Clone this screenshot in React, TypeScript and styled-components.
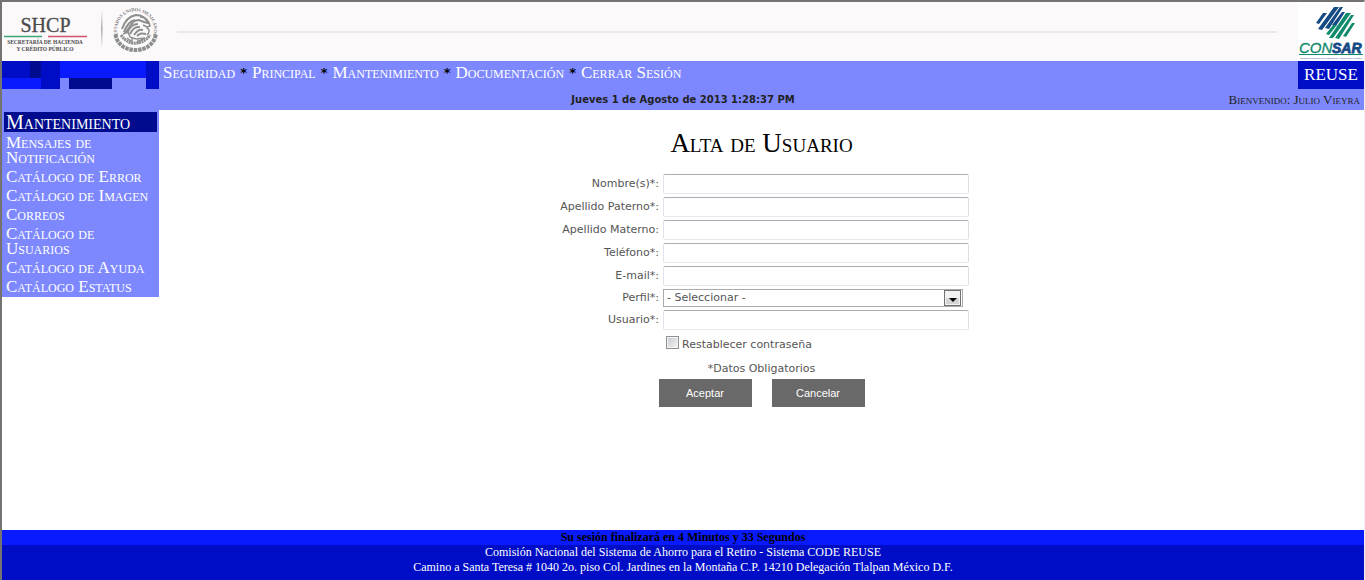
import React from 'react';
import styled, { createGlobalStyle } from 'styled-components';

const colors = {
  light: '#7d88ff',
  bright: '#0a1aff',
  mid: '#000dc7',
  dark: '#000b8e',
  label: '#555555',
};
const serif = `'Liberation Serif', 'Times New Roman', serif`;
const sans = `'DejaVu Sans', Verdana, sans-serif`;

const GlobalStyle = createGlobalStyle`
  * { box-sizing: border-box; }
  body { margin: 0; background: #fff; font-family: ${serif}; }
`;

const Page = styled.div`
  display: flex;
  flex-direction: column;
  min-height: 100vh;
  border-top: 2px solid #757272;
  border-left: 2px solid #757272;
  border-right: 1px solid #f0eef0;
`;

const Header = styled.header`
  display: flex;
  align-items: center;
  height: 59px;
  background: #fbf9fa;
`;

const Rule = styled.div`
  flex: 1;
  height: 2px;
  margin: 0 21px 0 16px;
  background: #eae8e9;
`;

const Band = styled.div`
  display: grid;
  grid-template-columns: 157px 1fr auto;
  grid-template-rows: 28px 21px;
  background: ${colors.light};
`;

const Nav = styled.nav`
  display: flex;
  align-items: center;
  gap: 5px;
  padding: 0 4px 5px;
  color: #000;
`;

const NavLink = styled.a`
  color: #fff;
  font-size: 17px;
  line-height: 20px;
  font-variant: small-caps;
  text-decoration: none;
`;

const Star = styled.span`
  font: bold 13px/20px ${sans};
`;

const SystemName = styled.div`
  width: 66px;
  background: ${colors.mid};
  color: #fff;
  font-size: 17px;
  line-height: 28px;
  text-align: center;
`;

const StatusRow = styled.div`
  grid-column: 1 / -1;
  display: grid;
  grid-template-columns: 1fr auto 1fr;
  align-items: center;
  color: #222;
`;

const Clock = styled.time`
  grid-column: 2;
  font: bold 10px/16px ${sans};
`;

const Welcome = styled.span`
  padding-right: 4px;
  font-size: 13px;
  line-height: 16px;
  font-variant: small-caps;
  text-align: right;
`;

const Body = styled.div`
  display: flex;
  flex: 1;
  align-items: flex-start;
`;

const Sidebar = styled.aside`
  width: 157px;
  padding: 2px 2px 1px;
  background: ${colors.light};
  color: #fff;
  font-variant: small-caps;
`;

const SideTitle = styled.h2`
  margin: 0 0 3px;
  padding: 0 2px;
  background: ${colors.dark};
  font-size: 20px;
  font-weight: normal;
  line-height: 20px;
`;

const SideList = styled.ul`
  display: grid;
  gap: 4px;
  margin: 0;
  padding: 0 2px 2px;
  list-style: none;
`;

const SideItem = styled.li`
  font-size: 17px;
  line-height: 15px;
`;

const SideLink = styled.a`
  color: inherit;
  text-decoration: none;
`;

const Main = styled.main`
  display: flex;
  flex: 1;
  flex-direction: column;
  align-items: center;
`;

const Title = styled.h1`
  margin: 18px 0 16px;
  font-size: 27px;
  font-weight: normal;
  line-height: 30px;
  font-variant: small-caps;
`;

const Form = styled.form`
  display: flex;
  flex-direction: column;
  align-items: center;
  color: ${colors.label};
  font: 11px/14px ${sans};
`;

const Fields = styled.div`
  display: grid;
  grid-template-columns: 105px 306px;
  gap: 3px 4px;
  align-items: center;
`;

const Label = styled.label`
  text-align: right;
  white-space: nowrap;
`;

const TextInput = styled.input`
  width: 100%;
  height: 20px;
  padding: 1px 3px;
  border: 1px solid #e3e9ef;
  border-top-color: #abadb3;
  border-left-color: #e2e3ea;
  border-right-color: #dbdfe6;
  border-radius: 2px;
  color: inherit;
  font: inherit;
`;

const SelectBox = styled.div`
  display: grid;
  grid-template-columns: 1fr 18px;
  width: 300px;
  height: 18px;
  border: 1px solid #ababab;
`;

const Select = styled.select`
  grid-area: 1 / 1 / 2 / 3;
  appearance: none;
  padding: 0 3px;
  border: 0;
  background: transparent;
  color: inherit;
  font: inherit;
`;

const SelectArrow = styled.svg`
  grid-area: 1 / 2;
  width: 18px;
  height: 16px;
  pointer-events: none;
`;

const CheckRow = styled.label`
  display: flex;
  align-items: flex-start;
  align-self: flex-start;
  gap: 3px;
  margin: 6px 0 8px 112px;
  line-height: 18px;
`;

const Checkbox = styled.input`
  appearance: none;
  width: 13px;
  height: 13px;
  margin: 0;
  border: 1px solid #8e8f8f;
  background: linear-gradient(135deg, #c5cad1, #f4f4f4);
  box-shadow: inset 0 0 0 1px #f4f4f4;
  &:checked { background: #4b5d8a; }
`;

const Note = styled.p`
  margin: 0 0 3px;
`;

const Buttons = styled.div`
  display: flex;
  gap: 20px;
`;

const Button = styled.button`
  width: 93px;
  height: 28px;
  padding: 0;
  border: 0;
  background: #696969;
  color: #fff;
  font: 11px/14px 'Liberation Sans', Arial, sans-serif;
`;

const Footer = styled.footer`
  background: ${colors.mid};
  color: #fff;
  font-size: 12px;
  line-height: 15px;
  text-align: center;
  padding-bottom: 5px;
`;

const Session = styled.div`
  background: ${colors.bright};
  color: #000;
  font-weight: bold;
`;

const GovernmentLogo = () => (
  <svg width="159" height="59" viewBox="2 2 159 59" role="img" aria-label="SHCP">
    <defs>
      <path id="sealArc" d="M118.500 37 A18.500 18.500 0 1 1 152.500 37" />
      <linearGradient id="divider" x1="0" y1="0" x2="0" y2="1">
        <stop offset="0" stopColor="#fbf9fa" />
        <stop offset=".5" stopColor="#aaa" />
        <stop offset="1" stopColor="#fbf9fa" />
      </linearGradient>
    </defs>
    <g fontFamily={serif} fill="#4a4a4a" textAnchor="middle">
      <text x="45.500" y="32" fontSize="20" stroke="#4a4a4a" strokeWidth=".3">SHCP</text>
      <text x="45" y="44" fontSize="5.500" fontWeight="bold">SECRETARÍA DE HACIENDA</text>
      <text x="45" y="50.500" fontSize="5.500" fontWeight="bold">Y CRÉDITO PÚBLICO</text>
    </g>
    <path d="M4 36.500H42" stroke="#3fa374" strokeWidth="1.300" />
    <path d="M48 36.500H87" stroke="#d4526c" strokeWidth="1.300" />
    <rect x="101" y="10" width="1.500" height="38" fill="url(#divider)" />
    <g fill="none" stroke="#8d8f8e">
      <path d="M115.500 34.500C117 44 125 50 135.500 50S154 44 155.800 34.500" strokeWidth="4" strokeDasharray="3.500 .8" />
      <path d="M121 35c5 7 11 9 14.500 8 6 0 11-3 14.500-8" strokeWidth="3" strokeDasharray="2 .6" />
      <path d="M122 29c3-9 8-13 14-14 6 0 10 3 12 8l-4-1-5-2-5 1-3 4-6 8" strokeWidth="2" />
      <path d="M124 32c3-8 6-11 11-12M127 33c3-7 6-9 11-9M130 34c3-6 5-7 10-7M134 35c3-4 5-6 9-5M137 36c3-3 5-3 9-2" strokeWidth="2" />
      <path d="M140 17c6 0 9 4 10 9l-3 1-4-2M146 27c4 2 4 5 1 8M123 34l5-2 2 5 6 2 9-1M132 38v6M138 38v6M127 38l4 3M143 39l-5 3" strokeWidth="1.500" />
    </g>
    <text fontFamily={serif} fontSize="4.500" fontWeight="bold" fill="#777">
      <textPath href="#sealArc" startOffset="50%" textAnchor="middle">ESTADOS UNIDOS MEXICANOS</textPath>
    </text>
  </svg>
);

const ConsarLogo = () => (
  <svg width="66" height="59" viewBox="1298 2 66 59" role="img" aria-label="CONSAR">
    <rect x="1298" y="2" width="66" height="59" fill="#fff" />
    <path
      d="M1316 23l7-10h4l-8 11zM1318 29l16-22h5l-17 23zM1325 28l15-21h3l-14 22zM1332 25l10-13h3l-9 14z"
      fill="#164a85"
    />
    <path
      d="M1326 34l7-9h4l-8 10zM1329 38l17-25h5l-18 25zM1335 38l16-23h3l-15 24zM1343 36l9-13h3l-9 14z"
      fill="#108a6c"
    />
    <g fontFamily="'Liberation Sans', Arial, sans-serif" fontStyle="italic">
      <text x="1299" y="53" fontSize="15" fill="#108a6c" stroke="#108a6c" strokeWidth=".3">CON</text>
      <text x="1332" y="53" fontSize="14" fontWeight="bold" fill="#164a85" stroke="#164a85" strokeWidth=".8">SAR</text>
    </g>
    <path d="M1299 54.500H1363" stroke="#108a6c" />
    <text x="1300" y="59" fontFamily="'Liberation Sans', Arial, sans-serif" fontSize="2.500" fill="#164a85">Comisión Nacional del Sistema de Ahorro para el Retiro</text>
  </svg>
);

const Mosaic = () => (
  <svg width="157" height="28" aria-hidden="true" shapeRendering="crispEdges">
    <path d="M0 0H28V17H0zM39 0H58V28H39zM144 0H157V28H144z" fill={colors.mid} />
    <path d="M28 0H39V17H28zM67 17H110V28H67z" fill={colors.dark} />
    <path d="M58 0H144V17H58zM0 17H39V28H0z" fill={colors.bright} />
  </svg>
);

const navItems = ['Seguridad', 'Principal', 'Mantenimiento', 'Documentación', 'Cerrar Sesión'];
const sideItems = [
  'Mensajes de Notificación',
  'Catálogo de Error',
  'Catálogo de Imagen',
  'Correos',
  'Catálogo de Usuarios',
  'Catálogo de Ayuda',
  'Catálogo Estatus',
];
const fields = [
  { id: 'nombre', label: 'Nombre(s)*:' },
  { id: 'paterno', label: 'Apellido Paterno*:' },
  { id: 'materno', label: 'Apellido Materno:' },
  { id: 'telefono', label: 'Teléfono*:' },
  { id: 'email', label: 'E-mail*:' },
];

export default function App() {
  return (
    <>
      <GlobalStyle />
      <Page>
        <Header>
          <GovernmentLogo />
          <Rule />
          <ConsarLogo />
        </Header>
        <Band>
          <Mosaic />
          <Nav>
            {navItems.map((item, i) => (
              <React.Fragment key={item}>
                {i > 0 && <Star>*</Star>}
                <NavLink href="#">{item}</NavLink>
              </React.Fragment>
            ))}
          </Nav>
          <SystemName>REUSE</SystemName>
          <StatusRow>
            <Clock>Jueves 1 de Agosto de 2013 1:28:37 PM</Clock>
            <Welcome>Bienvenido: Julio Vieyra</Welcome>
          </StatusRow>
        </Band>
        <Body>
          <Sidebar>
            <SideTitle>Mantenimiento</SideTitle>
            <SideList>
              {sideItems.map((item) => (
                <SideItem key={item}>
                  <SideLink href="#">{item}</SideLink>
                </SideItem>
              ))}
            </SideList>
          </Sidebar>
          <Main>
            <Title>Alta de Usuario</Title>
            <Form onSubmit={(e) => e.preventDefault()}>
              <Fields>
                {fields.map((f) => (
                  <React.Fragment key={f.id}>
                    <Label htmlFor={f.id}>{f.label}</Label>
                    <TextInput id={f.id} type="text" />
                  </React.Fragment>
                ))}
                <Label htmlFor="perfil">Perfil*:</Label>
                <SelectBox>
                  <Select id="perfil">
                    <option>- Seleccionar -</option>
                  </Select>
                  <SelectArrow viewBox="0 0 18 16" aria-hidden="true">
                    <rect x=".5" y=".5" width="16" height="15" fill="#f2f2f2" stroke="#707070" />
                    <rect x="2" y="8" width="13" height="6" fill="#d4d4d4" />
                    <path d="M5 8h8l-4 4z" fill="#000" />
                  </SelectArrow>
                </SelectBox>
                <Label htmlFor="usuario">Usuario*:</Label>
                <TextInput id="usuario" type="text" />
              </Fields>
              <CheckRow>
                <Checkbox type="checkbox" />
                Restablecer contraseña
              </CheckRow>
              <Note>*Datos Obligatorios</Note>
              <Buttons>
                <Button type="submit">Aceptar</Button>
                <Button type="button">Cancelar</Button>
              </Buttons>
            </Form>
          </Main>
        </Body>
        <Footer>
          <Session>Su sesión finalizará en 4 Minutos y 33 Segundos</Session>
          <div>Comisión Nacional del Sistema de Ahorro para el Retiro - Sistema CODE REUSE</div>
          <div>Camino a Santa Teresa # 1040 2o. piso Col. Jardines en la Montaña C.P. 14210 Delegación Tlalpan México D.F.</div>
        </Footer>
      </Page>
    </>
  );
}
